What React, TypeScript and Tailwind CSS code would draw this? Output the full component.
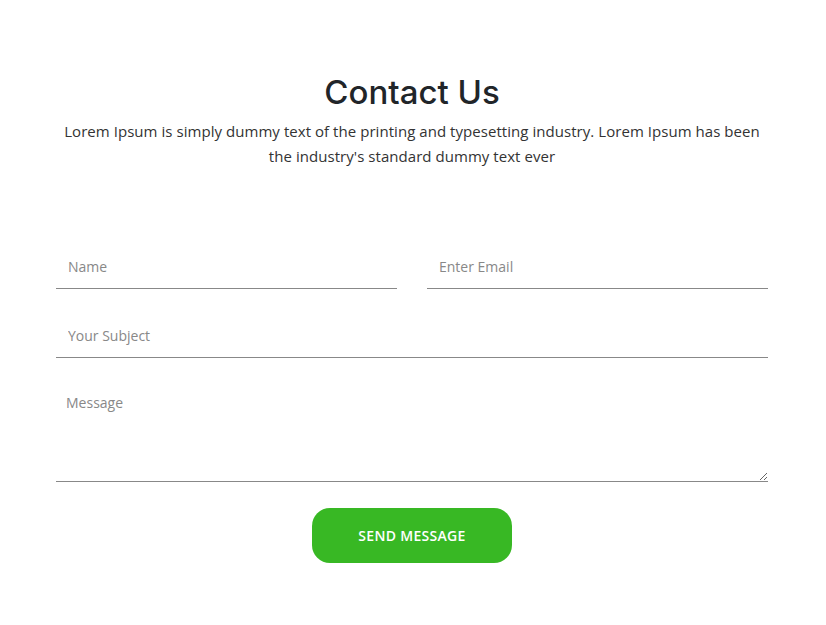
export default function App() {
  return (
    <div className="min-h-[625px] w-full bg-white" style={{ fontFamily: '"Open Sans", "Noto Sans", sans-serif' }}>
      <div className="ml-[56px] w-[712px] pt-[70px]">
        <h1 className="text-center text-[33px] font-medium leading-[44px] text-[#212529]" style={{ fontFamily: 'Inter, "Noto Sans", sans-serif' }}>
          Contact Us
        </h1>
        <p className="mt-[5px] text-center text-[15px] leading-[25px] tracking-[0.05px] text-[#333]">
          Lorem Ipsum is simply dummy text of the printing and typesetting industry. Lorem Ipsum has been the industry's standard dummy text ever
        </p>
        <form className="mt-[75px] flex flex-col">
          <div className="grid grid-cols-2 gap-[30px]">
            <input
              placeholder="Name"
              className="h-[45px] border-b border-[#888] px-3 text-[14px] text-[#333] outline-none placeholder:text-[#888]"
            />
            <input
              placeholder="Enter Email"
              className="h-[45px] border-b border-[#888] px-3 text-[14px] text-[#333] outline-none placeholder:text-[#888]"
            />
          </div>
          <input
            placeholder="Your Subject"
            className="mt-[24px] h-[45px] border-b border-[#888] px-3 text-[14px] text-[#333] outline-none placeholder:text-[#888]"
          />
          <textarea
            placeholder="Message"
            className="mt-[24px] h-[100px] border-b border-[#888] px-[10px] pt-[10px] text-[14px] text-[#333] outline-none placeholder:text-[#888]"
          />
          <div className="mt-[26px] flex justify-center">
            <button
              type="button"
              className="h-[55px] w-[200px] rounded-[18px] bg-[#38b824] text-[14px] font-semibold tracking-[0.3px] text-white"
            >
              SEND MESSAGE
            </button>
          </div>
        </form>
      </div>
    </div>
  );
}
